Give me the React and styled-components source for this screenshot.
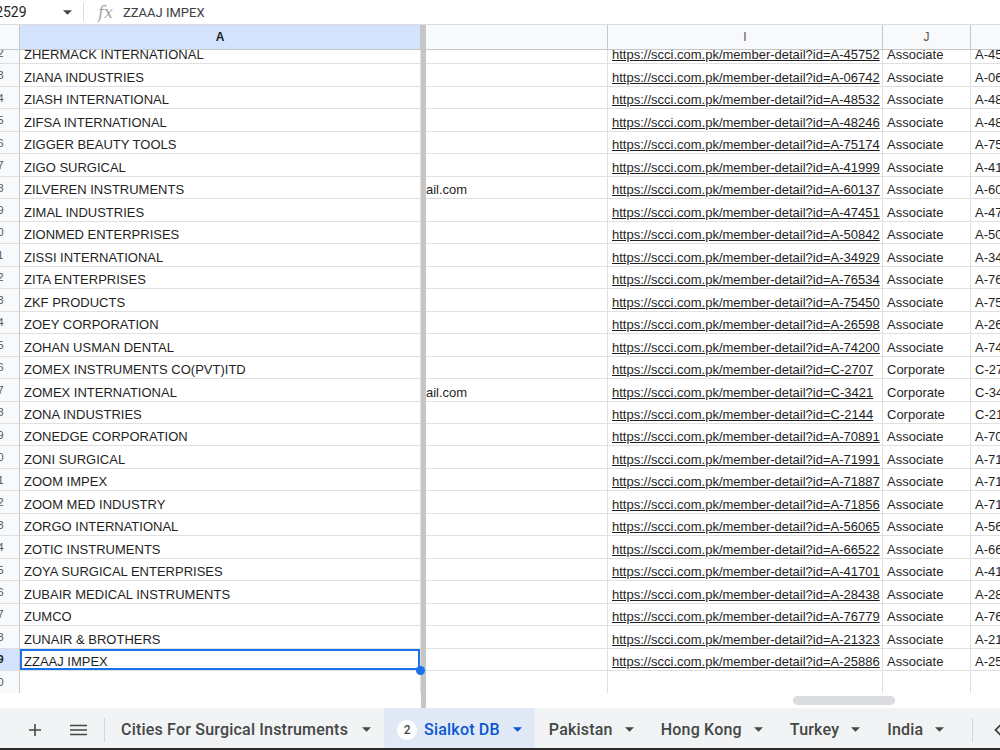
import React from 'react'
import styled, { createGlobalStyle } from 'styled-components'

const GlobalStyle = createGlobalStyle`
  html, body {
    margin: 0;
    padding: 0;
    background: #fff;
  }
  body {
    font-family: "Liberation Sans", Arial, sans-serif;
    overflow: hidden;
  }
`

// name, overflow text from the hidden column, id, type
const members = [
  ['ZHERMACK INTERNATIONAL', '', 'A-45752', 'Associate'],
  ['ZIANA INDUSTRIES', '', 'A-06742', 'Associate'],
  ['ZIASH INTERNATIONAL', '', 'A-48532', 'Associate'],
  ['ZIFSA INTERNATIONAL', '', 'A-48246', 'Associate'],
  ['ZIGGER BEAUTY TOOLS', '', 'A-75174', 'Associate'],
  ['ZIGO SURGICAL', '', 'A-41999', 'Associate'],
  ['ZILVEREN INSTRUMENTS', 'ail.com', 'A-60137', 'Associate'],
  ['ZIMAL INDUSTRIES', '', 'A-47451', 'Associate'],
  ['ZIONMED ENTERPRISES', '', 'A-50842', 'Associate'],
  ['ZISSI INTERNATIONAL', '', 'A-34929', 'Associate'],
  ['ZITA ENTERPRISES', '', 'A-76534', 'Associate'],
  ['ZKF PRODUCTS', '', 'A-75450', 'Associate'],
  ['ZOEY CORPORATION', '', 'A-26598', 'Associate'],
  ['ZOHAN USMAN DENTAL', '', 'A-74200', 'Associate'],
  ['ZOMEX INSTRUMENTS CO(PVT)ITD', '', 'C-2707', 'Corporate'],
  ['ZOMEX INTERNATIONAL', 'ail.com', 'C-3421', 'Corporate'],
  ['ZONA INDUSTRIES', '', 'C-2144', 'Corporate'],
  ['ZONEDGE CORPORATION', '', 'A-70891', 'Associate'],
  ['ZONI SURGICAL', '', 'A-71991', 'Associate'],
  ['ZOOM IMPEX', '', 'A-71887', 'Associate'],
  ['ZOOM MED INDUSTRY', '', 'A-71856', 'Associate'],
  ['ZORGO INTERNATIONAL', '', 'A-56065', 'Associate'],
  ['ZOTIC INSTRUMENTS', '', 'A-66522', 'Associate'],
  ['ZOYA SURGICAL ENTERPRISES', '', 'A-41701', 'Associate'],
  ['ZUBAIR MEDICAL INSTRUMENTS', '', 'A-28438', 'Associate'],
  ['ZUMCO', '', 'A-76779', 'Associate'],
  ['ZUNAIR & BROTHERS', '', 'A-21323', 'Associate'],
  ['ZZAAJ IMPEX', '', 'A-25886', 'Associate'],
]

const tabs = ['Pakistan', 'Hong Kong', 'Turkey', 'India']

const COLS = '48px 401px 5px 182px 275px 88px 100px'
const GRID = '#e0e0e0'

export default function App() {
  return (
    <Page>
      <GlobalStyle />

      <FormulaBar>
        <NameBox>A2529</NameBox>
        <Caret $color="#444746" />
        <BarDivider />
        <Fx>fx</Fx>
        <FormulaText>ZZAAJ IMPEX</FormulaText>
      </FormulaBar>

      <Sheet>
        <Row $head>
          <HeadCell />
          <HeadCell $selected>A</HeadCell>
          <Freeze />
          <HeadCell />
          <HeadCell>I</HeadCell>
          <HeadCell>J</HeadCell>
          <HeadCell />
        </Row>

        <Body>
          <Rows>
            {members.map(([name, spill, id, type], i) => {
              const selected = i === members.length - 1
              return (
                <Row key={id}>
                  <RowHead $selected={selected}>{2502 + i}</RowHead>
                  <Cell $selected={selected}>
                    {name}
                    {selected && <Handle />}
                  </Cell>
                  <Freeze />
                  <Cell $pad={0}>{spill}</Cell>
                  <Cell $link>https://scci.com.pk/member-detail?id={id}</Cell>
                  <Cell>{type}</Cell>
                  <Cell>{id}</Cell>
                </Row>
              )
            })}
            <Row>
              <RowHead>2530</RowHead>
              <Cell />
              <Freeze />
              <Cell />
              <Cell />
              <Cell />
              <Cell />
            </Row>
          </Rows>
        </Body>

        <ScrollRow>
          <div />
          <Freeze />
          <Track>
            <Thumb />
          </Track>
        </ScrollRow>
      </Sheet>

      <TabBar>
        <IconButton>
          <svg width="14" height="14" viewBox="0 0 14 14">
            <path d="M7 1v12M1 7h12" stroke="#444746" strokeWidth="1.6" />
          </svg>
        </IconButton>
        <IconButton $left={3}>
          <svg width="17" height="12" viewBox="0 0 17 12">
            <path d="M0 1.5h17M0 6h17M0 10.5h17" stroke="#444746" strokeWidth="1.7" />
          </svg>
        </IconButton>
        <TabDivider />
        <Tab>
          Cities For Surgical Instruments
          <Caret $color="#444746" $left={14} />
        </Tab>
        <Tab $active>
          <Badge>2</Badge>
          Sialkot DB
          <Caret $color="#0b57d0" $left={13} />
        </Tab>
        {tabs.map((t) => (
          <Tab key={t}>
            {t}
            <Caret $color="#444746" $left={12} />
          </Tab>
        ))}
        <TabDivider $left={15} />
        <Chevron>
          <svg width="10" height="14" viewBox="0 0 10 14">
            <path d="M8 1.5L2.5 7 8 12.5" fill="none" stroke="#444746" strokeWidth="1.8" />
          </svg>
        </Chevron>
      </TabBar>
    </Page>
  )
}

function Caret({ $color, $left }) {
  return (
    <CaretIcon $left={$left} width="9" height="5" viewBox="0 0 10 5">
      <path d="M0 0h10L5 5z" fill={$color} />
    </CaretIcon>
  )
}

const Page = styled.div`
  width: 1000px;
  height: 750px;
  display: flex;
  flex-direction: column;
  overflow: hidden;
  background: #fff;
`

const FormulaBar = styled.div`
  height: 24px;
  flex: none;
  display: flex;
  align-items: center;
  border-bottom: 1px solid #dadce0;
  font-family: Roboto, "Liberation Sans", sans-serif;
  font-size: 14px;
  color: #1f1f1f;
`

const NameBox = styled.div`
  margin-left: -14px;
  width: 77px;
  white-space: nowrap;
`

const CaretIcon = styled.svg`
  flex: none;
  margin-left: ${(p) => (p.$left || 0)}px;
`

const BarDivider = styled.div`
  width: 1px;
  height: 18px;
  background: #dadce0;
  margin: 0 14px 0 11px;
`

const Fx = styled.span`
  font-family: "DejaVu Serif", "Liberation Serif", serif;
  font-style: italic;
  font-size: 16px;
  color: #a0a4a8;
  margin-right: 10px;
`

const FormulaText = styled.span`
  font-size: 13px;
  color: #3c4043;
`

const Sheet = styled.div`
  margin-left: -28px;
  display: flex;
  flex-direction: column;
  flex: none;
`

const Row = styled.div`
  display: grid;
  grid-template-columns: ${COLS};
  height: ${(p) => (p.$head ? '25px' : '22.48px')};
  background: ${(p) => (p.$head ? '#f8f9fa' : '#fff')};
`

const HeadCell = styled.div`
  display: flex;
  align-items: center;
  justify-content: center;
  border-right: 1px solid #c4c7c5;
  border-bottom: 1px solid #c4c7c5;
  font-size: 12px;
  color: ${(p) => (p.$selected ? '#1f1f1f' : '#555')};
  font-weight: ${(p) => (p.$selected ? 700 : 400)};
  background: ${(p) => (p.$selected ? '#d3e3fd' : 'transparent')};
`

const Freeze = styled.div`
  background: #c6c6c6;
`

const Body = styled.div`
  height: 643px;
  overflow: hidden;
`

const Rows = styled.div`
  margin-top: -8px;
`

const RowHead = styled.div`
  display: flex;
  align-items: center;
  justify-content: center;
  padding-right: 8px;
  background: ${(p) => (p.$selected ? '#d3e3fd' : '#f8f9fa')};
  border-right: 1px solid #c4c7c5;
  border-bottom: 1px solid ${GRID};
  font-size: 11px;
  font-weight: ${(p) => (p.$selected ? 700 : 400)};
  color: ${(p) => (p.$selected ? '#1f1f1f' : '#555')};
`

const Cell = styled.div`
  position: relative;
  display: flex;
  align-items: flex-end;
  padding: 0 0 1px ${(p) => (p.$pad ?? 4)}px;
  border-right: 1px solid ${GRID};
  border-bottom: 1px solid ${GRID};
  box-shadow: ${(p) => (p.$selected ? 'inset 0 0 0 2px #1a73e8' : 'none')};
  font-size: 13px;
  line-height: 15px;
  color: #1f1f1f;
  white-space: nowrap;
  overflow: ${(p) => (p.$selected ? 'visible' : 'hidden')};
  text-decoration: ${(p) => (p.$link ? 'underline' : 'none')};
  text-underline-offset: 1px;
`

const Handle = styled.span`
  position: absolute;
  right: -5px;
  bottom: -5px;
  width: 9px;
  height: 9px;
  border-radius: 50%;
  background: #1a73e8;
  z-index: 2;
`

const ScrollRow = styled.div`
  display: grid;
  grid-template-columns: 449px 5px 1fr;
  height: 15px;
`

const Track = styled.div`
  display: flex;
  align-items: center;
  padding-left: 367px;
`

const Thumb = styled.div`
  width: 102px;
  height: 9px;
  border-radius: 5px;
  background: #dadce0;
`

const TabBar = styled.div`
  height: 40px;
  flex: none;
  display: flex;
  align-items: center;
  background: #f1f3f4;
  border-bottom: 2px solid #2a2a2a;
  font-family: Roboto, "Liberation Sans", sans-serif;
  font-size: 16px;
  font-weight: 500;
  color: #444746;
  white-space: nowrap;
`

const IconButton = styled.div`
  width: 40px;
  height: 40px;
  flex: none;
  display: flex;
  align-items: center;
  justify-content: center;
  padding-top: 3px;
  box-sizing: border-box;
  margin-left: ${(p) => (p.$left ?? 15)}px;
`

const TabDivider = styled.div`
  width: 1px;
  height: 24px;
  flex: none;
  background: #d3d5d8;
  margin-top: 3px;
  margin-left: ${(p) => (p.$left ?? 6)}px;
  margin-right: 2px;
`

const Tab = styled.div`
  height: 40px;
  box-sizing: border-box;
  flex: none;
  display: flex;
  align-items: center;
  padding: 3px 13px 0 ${(p) => (p.$active ? 13 : 14)}px;
  background: ${(p) => (p.$active ? '#e1e9f7' : 'transparent')};
  color: ${(p) => (p.$active ? '#0b57d0' : '#444746')};
  letter-spacing: 0.2px;
`

const Badge = styled.span`
  width: 20px;
  height: 20px;
  border-radius: 50%;
  background: #fff;
  display: flex;
  align-items: center;
  justify-content: center;
  font-size: 12px;
  font-weight: 500;
  color: #444746;
  margin-right: 7px;
  letter-spacing: 0;
`

const Chevron = styled.div`
  margin-left: 18px;
  padding-top: 3px;
  display: flex;
  align-items: center;
`
